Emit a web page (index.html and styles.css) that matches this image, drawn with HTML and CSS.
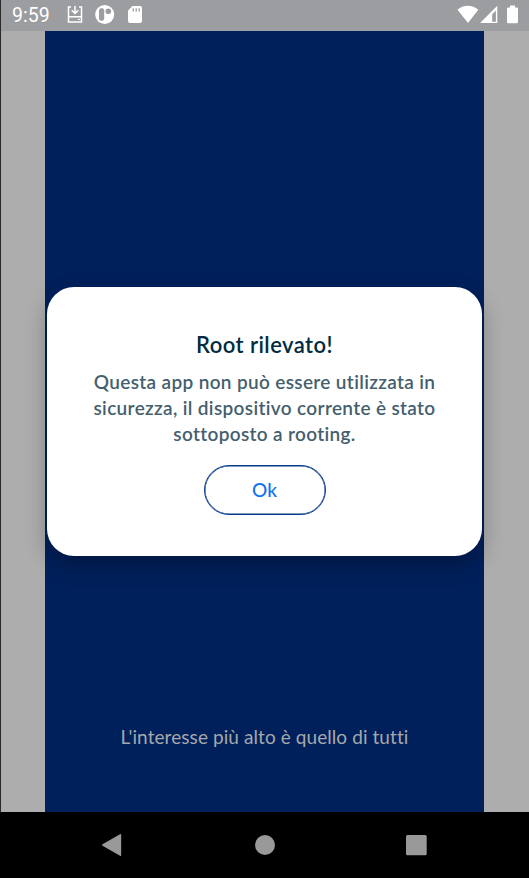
FILE: index.html
```
<!DOCTYPE html>
<html lang="it">
<head>
<meta charset="utf-8">
<title>Root rilevato</title>
<link rel="stylesheet" href="styles.css">
</head>
<body>
<div class="screen">
  <header class="status">
    <span class="clock">9:59</span>
    <svg class="notifications" width="80" height="31" viewBox="0 0 80 31" fill="none">
      <path d="M6 7H3.500v15h13V7H14M3.500 16.700h13M10 6v7M6.700 10.200l3.300 3.300 3.300-3.300" stroke="#fff" stroke-width="1.500"/>
      <path d="M12.800 19.400h2" stroke="#fff" stroke-width="1.300"/>
      <circle cx="39.700" cy="14.500" r="9.500" fill="#fff"/>
      <rect x="34" y="8.300" width="5.200" height="12.500" rx="2.200" fill="#9b9da0"/>
      <circle cx="43.300" cy="11.300" r="2.800" fill="#9b9da0"/>
      <path d="M67.500 6h7.500q2 0 2 2v13q0 2-2 2H65q-2 0-2-2V10.500z" fill="#fff"/>
      <path d="M68.200 8.300v3.200M71.200 8.300v3.200M74.200 8.300v3.200" stroke="#9b9da0" stroke-width="1.300"/>
    </svg>
    <svg class="signals" width="64" height="31" viewBox="0 0 64 31">
      <path d="M.5 9.700C6 4.300 15.500 4.300 21.300 9.700L11 23z" fill="#fff"/>
      <path fill-rule="evenodd" d="M40.300 5.700V23H23zM38.900 10.500l-3.700 3.700v7.500h3.700z" fill="#fff"/>
      <path d="M53 5.500h5v2h2q1 0 1 1V22q0 1.300-1.300 1.300h-8.400Q50 23.300 50 22V8.500q0-1 1-1h2z" fill="#fff"/>
    </svg>
  </header>
  <main class="stage">
    <div class="splash"><p class="tagline">L'interesse più alto è quello di tutti</p></div>
    <section class="dialog" role="dialog">
      <h1 class="title">Root rilevato!</h1>
      <p class="message"><span class="l1">Questa app non può essere utilizzata in</span><span class="l2">sicurezza, il dispositivo corrente è stato</span><span class="l3">sottoposto a rooting.</span></p>
      <button class="ok">Ok</button>
    </section>
  </main>
  <nav class="nav">
    <svg width="529" height="66" viewBox="0 0 529 66" fill="#999">
      <path d="M102.500 32.300L120 22.200q1.200-.6 1.200.6v20.400q0 1.200-1.200.6L102.500 33.700q-1-.7 0-1.400z"/>
      <circle cx="265" cy="33" r="10"/>
      <rect x="406" y="23" width="20.700" height="20.300" rx="1.500"/>
    </svg>
  </nav>
</div>
</body>
</html>
```
FILE: styles.css
```
* { box-sizing: border-box; }
body { margin: 0; font-family: Lato, "Liberation Sans", sans-serif; font-variant-ligatures: none; }
.screen { position: relative; width: 529px; height: 878px; display: flex; flex-direction: column; overflow: hidden; background: #000; }
.screen::before { content: ""; position: absolute; z-index: 3; left: 0; top: 0; width: 1px; height: 812px; background: #29292b; }
.status { height: 31px; flex: none; display: flex; align-items: center; background: #9b9da0; position: relative; z-index: 2; }
.clock { width: 65px; padding-left: 12px; font: 400 19.500px/31px Roboto, sans-serif; color: #fff; }
.signals { margin-left: auto; margin-right: 8px; }
.stage { height: 781px; flex: none; display: grid; justify-items: center; background: #adadad; }
.splash { grid-area: 1 / 1; width: 439px; display: flex; align-items: flex-end; justify-content: center; background: #00205b; }
.tagline { margin: 0 0 62px; font-size: 19px; line-height: 26px; letter-spacing: .08px; color: #a6a8ab; white-space: nowrap; }
.dialog { grid-area: 1 / 1; z-index: 1; width: 435px; height: 269px; margin-top: 256px; padding-top: 44px; display: flex; flex-direction: column; align-items: center; border-radius: 27px; background: #fff; box-shadow: 0 9px 22px rgba(0,0,0,.28); }
.title { margin: 0; font-size: 22px; line-height: 28px; font-weight: 600; letter-spacing: .45px; color: #002b40; white-space: nowrap; }
.message { margin: 10px 0 0; display: flex; flex-direction: column; align-items: center; font-size: 19px; line-height: 26px; font-weight: 600; letter-spacing: .34px; color: #455f6e; white-space: nowrap; }
.ok { width: 122px; height: 50px; margin: 18px 0 0; padding: 0; border: 1px solid #083a8c; box-shadow: inset 0 0 0 .5px #083a8c; border-radius: 25px; background: #fff; font: 500 19px/26px Lato, sans-serif; color: #0f73f0; }
```
